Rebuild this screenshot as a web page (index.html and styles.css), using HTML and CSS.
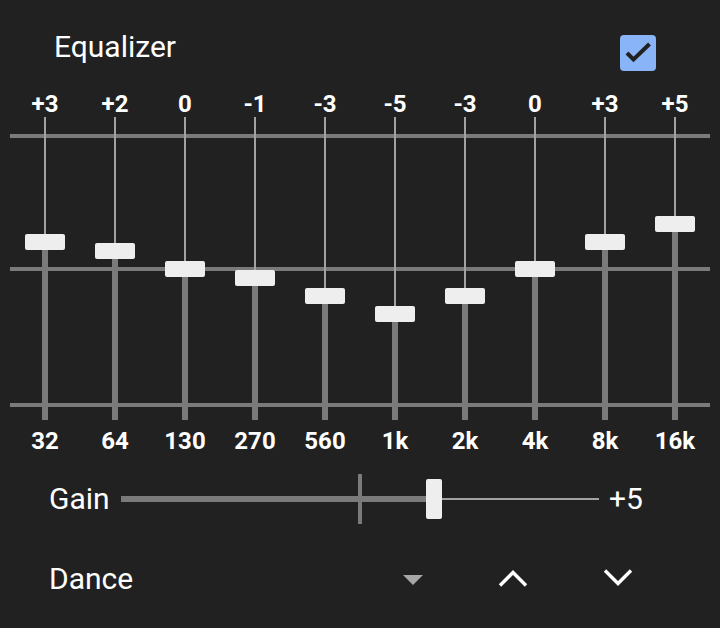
FILE: index.html
```html
<!DOCTYPE html>
<html>
<head>
<meta charset="utf-8">
<link rel="stylesheet" href="styles.css">
</head>
<body>
<div class="app">
  <div class="header">
    <div class="title">Equalizer</div>
    <div class="checkbox">
      <svg width="36" height="36" viewBox="0 0 36 36"><polyline points="7,18 13.5,24.5 29.5,9" fill="none" stroke="#212121" stroke-width="4"/></svg>
    </div>
  </div>
  <div class="eq">
    <div class="band"><div class="val">+3</div><div class="track" style="--v:3"><div class="thumb"></div></div><div class="freq">32</div></div>
    <div class="band"><div class="val">+2</div><div class="track" style="--v:2"><div class="thumb"></div></div><div class="freq">64</div></div>
    <div class="band"><div class="val">0</div><div class="track" style="--v:0"><div class="thumb"></div></div><div class="freq">130</div></div>
    <div class="band"><div class="val">-1</div><div class="track" style="--v:-1"><div class="thumb"></div></div><div class="freq">270</div></div>
    <div class="band"><div class="val">-3</div><div class="track" style="--v:-3"><div class="thumb"></div></div><div class="freq">560</div></div>
    <div class="band"><div class="val">-5</div><div class="track" style="--v:-5"><div class="thumb"></div></div><div class="freq">1k</div></div>
    <div class="band"><div class="val">-3</div><div class="track" style="--v:-3"><div class="thumb"></div></div><div class="freq">2k</div></div>
    <div class="band"><div class="val">0</div><div class="track" style="--v:0"><div class="thumb"></div></div><div class="freq">4k</div></div>
    <div class="band"><div class="val">+3</div><div class="track" style="--v:3"><div class="thumb"></div></div><div class="freq">8k</div></div>
    <div class="band"><div class="val">+5</div><div class="track" style="--v:5"><div class="thumb"></div></div><div class="freq">16k</div></div>
  </div>
  <div class="gain-row">
    <div class="row-label gain-label">Gain</div>
    <div class="gain-slider">
      <div class="gain-fill"></div>
      <div class="gain-knob"></div>
      <div class="gain-rest"></div>
      <div class="gain-tick"></div>
    </div>
    <div class="gain-value">+5</div>
  </div>
  <div class="preset-row">
    <div class="row-label preset-label">Dance</div>
    <div class="icon-btn drop">
      <svg width="20" height="10" viewBox="0 0 20 10"><polygon points="0,0 20,0 10,10" fill="#a6a6a6"/></svg>
    </div>
    <div class="icon-btn up">
      <svg width="30" height="19" viewBox="0 0 30 19"><polyline points="2,16.5 15,3.5 28,16.5" fill="none" stroke="#ffffff" stroke-width="3.4"/></svg>
    </div>
    <div class="icon-btn down">
      <svg width="30" height="19" viewBox="0 0 30 19"><polyline points="2,2.5 15,15.5 28,2.5" fill="none" stroke="#ffffff" stroke-width="3.4"/></svg>
    </div>
  </div>
</div>
</body>
</html>
```
FILE: styles.css
```css
html, body {
  margin: 0;
  padding: 0;
  background: #212121;
}
body {
  font-family: Roboto, "Noto Sans", sans-serif;
  color: #ffffff;
  width: 720px;
  height: 628px;
  overflow: hidden;
}
.header {
  height: 91px;
  box-sizing: border-box;
  padding: 29px 64px 0 54px;
  display: flex;
  justify-content: space-between;
  align-items: flex-start;
}
.title {
  font-size: 30px;
  line-height: 36px;
}
.checkbox {
  margin-top: 6px;
  width: 36px;
  height: 36px;
  border-radius: 4px;
  background: #8ab4f8;
}
.checkbox svg {
  display: block;
}
.eq {
  display: flex;
  padding: 0 10px;
}
.band {
  width: 70px;
  display: flex;
  flex-direction: column;
  align-items: center;
}
.val, .freq {
  font-size: 24px;
  font-weight: 700;
  line-height: 26px;
  height: 26px;
  white-space: nowrap;
}
.freq {
  margin-top: 8px;
}
.track {
  position: relative;
  width: 70px;
  height: 303px;
  background:
    linear-gradient(#7a7a7a, #7a7a7a) 0 17px / 100% 4px no-repeat,
    linear-gradient(#7a7a7a, #7a7a7a) 0 150px / 100% 4px no-repeat,
    linear-gradient(#7a7a7a, #7a7a7a) 0 286px / 100% 4px no-repeat;
}
.track::before {
  content: "";
  position: absolute;
  left: 34px;
  width: 2px;
  top: 0;
  bottom: 0;
  background: #a2a2a2;
}
.track::after {
  content: "";
  position: absolute;
  left: 32px;
  width: 6px;
  top: calc(152px - var(--v) * 8.93px);
  bottom: 0;
  background: #7a7a7a;
}
.thumb {
  position: absolute;
  left: 15px;
  width: 40px;
  height: 16px;
  top: calc(144px - var(--v) * 8.93px);
  border-radius: 2px;
  background: #eeeeee;
  z-index: 1;
}
.gain-row {
  margin-top: 20px;
  height: 50px;
  display: flex;
  align-items: center;
  padding-left: 49px;
}
.row-label {
  font-size: 30px;
  line-height: 50px;
}
.gain-label {
  width: 72px;
}
.gain-slider {
  position: relative;
  width: 478px;
  height: 50px;
  display: flex;
  align-items: center;
}
.gain-fill {
  width: 305px;
  height: 6px;
  background: #7a7a7a;
}
.gain-knob {
  width: 16px;
  height: 40px;
  border-radius: 2px;
  background: #eeeeee;
}
.gain-rest {
  flex: 1;
  height: 2px;
  background: #a2a2a2;
}
.gain-tick {
  position: absolute;
  left: 237px;
  top: 0;
  width: 4px;
  height: 50px;
  background: #7a7a7a;
}
.gain-value {
  margin-left: 10px;
  font-size: 30px;
  line-height: 50px;
}
.preset-row {
  margin-top: 30px;
  height: 50px;
  display: flex;
  align-items: center;
  padding-left: 49px;
}
.preset-label {
  flex: 1;
}
.icon-btn {
  width: 48px;
  height: 48px;
  display: flex;
  align-items: center;
  justify-content: center;
}
.icon-btn svg {
  display: block;
}
.drop {
  margin-right: 52px;
}
.drop svg {
  margin-top: 1px;
}
.up {
  margin-right: 57px;
}
.up svg {
  margin-top: -2px;
}
.down {
  margin-right: 78px;
}
.down svg {
  margin-top: -3px;
}
```
